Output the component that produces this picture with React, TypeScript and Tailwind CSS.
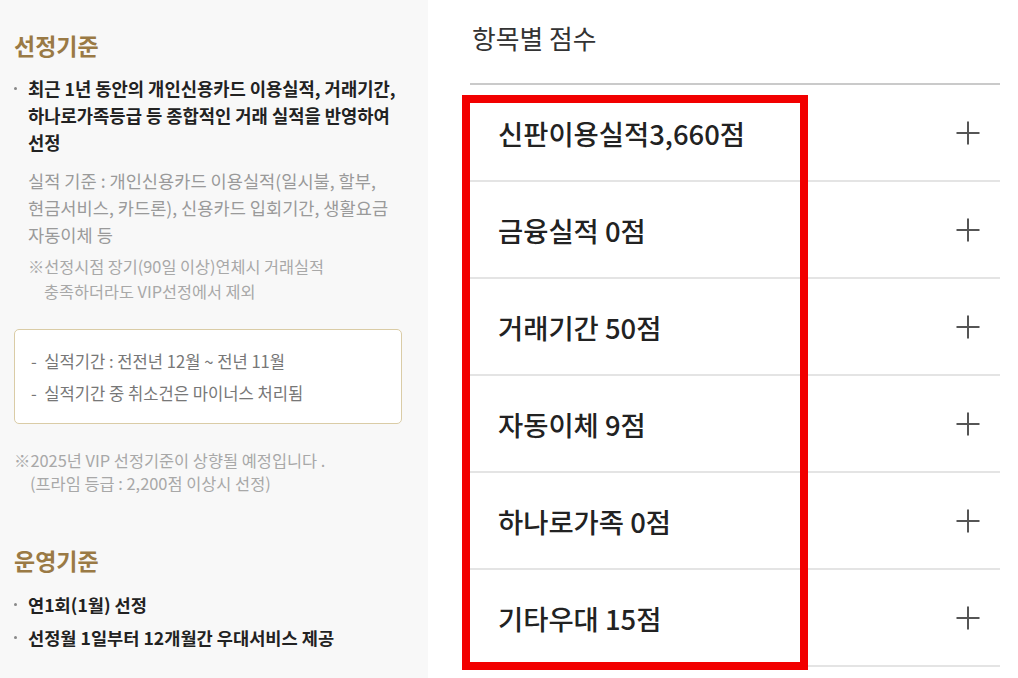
import React from "react";

const FONT = { fontFamily: '"Noto Sans CJK KR", "Noto Sans", "Liberation Sans", sans-serif' };

function Dot() {
  return (
    <span className="flex h-[27px] w-[14px] shrink-0 items-center">
      <span className="block h-[3px] w-[3px] rounded-full bg-[#888]" />
    </span>
  );
}

function Plus() {
  return (
    <svg width="24" height="24" viewBox="0 0 24 24" className="shrink-0">
      <line x1="12" y1="0.5" x2="12" y2="23.5" stroke="#555" strokeWidth="2" />
      <line x1="0.5" y1="12" x2="23.5" y2="12" stroke="#555" strokeWidth="2" />
    </svg>
  );
}

const rows = [
  "신판이용실적3,660점",
  "금융실적 0점",
  "거래기간 50점",
  "자동이체 9점",
  "하나로가족 0점",
  "기타우대 15점",
];

export default function App() {
  return (
    <div className="relative flex h-[678px] w-[1018px] overflow-hidden bg-white" style={FONT}>
      {/* Left panel */}
      <div className="flex h-full w-[428px] shrink-0 flex-col bg-[#f8f8f8] pl-[14px] pr-[16px] pt-[30px]">
        <h2 className="text-[23px] font-bold leading-[30px] text-[#9a7a45]">선정기준</h2>

        <div className="mt-[14.5px] flex">
          <Dot />
          <p className="whitespace-nowrap text-[17.7px] font-bold leading-[27px] text-[#222]">
            최근 1년 동안의 개인신용카드 이용실적, 거래기간,
            <br />
            하나로가족등급 등 종합적인 거래 실적을 반영하여
            <br />
            선정
          </p>
        </div>

        <p className="ml-[14px] mt-[11px] whitespace-nowrap text-[17.6px] leading-[27px] text-[#9a9a9a]">
          실적 기준 : 개인신용카드 이용실적(일시불, 할부,
          <br />
          현금서비스, 카드론), 신용카드 입회기간, 생활요금
          <br />
          자동이체 등
        </p>

        <p className="ml-[14px] mt-[6px] whitespace-nowrap text-[16.3px] leading-[25px] text-[#a8a8a8]">
          ※선정시점 장기(90일 이상)연체시 거래실적
          <br />
          <span className="pl-[16px]">충족하더라도 VIP선정에서 제외</span>
        </p>

        <div className="mt-[25.5px] mr-[10px] flex h-[95px] flex-col gap-[8px] rounded-[5px] border border-[#dacca6] bg-white pl-[16px] pt-[19px]">
          <p className="whitespace-nowrap text-[16.6px] leading-[24px] text-[#777]">-&nbsp;&nbsp;실적기간 : 전전년 12월 ~ 전년 11월</p>
          <p className="whitespace-nowrap text-[16.6px] leading-[24px] text-[#777]">-&nbsp;&nbsp;실적기간 중 취소건은 마이너스 처리됨</p>
        </div>

        <p className="mt-[24.5px] whitespace-nowrap text-[16.4px] leading-[23px] text-[#a8a8a8]">
          ※2025년 VIP 선정기준이 상향될 예정입니다 .
          <br />
          <span className="pl-[16px]">(프라임 등급 : 2,200점 이상시 선정)</span>
        </p>

        <h2 className="mt-[50.5px] text-[23px] font-bold leading-[30px] text-[#9a7a45]">운영기준</h2>

        <div className="mt-[15.5px] flex">
          <Dot />
          <p className="whitespace-nowrap text-[17.6px] font-bold leading-[27px] text-[#222]">연1회(1월) 선정</p>
        </div>
        <div className="mt-[6px] flex">
          <Dot />
          <p className="whitespace-nowrap text-[17.6px] font-bold leading-[27px] text-[#222]">선정월 1일부터 12개월간 우대서비스 제공</p>
        </div>
      </div>

      {/* Right panel */}
      <div className="flex h-full flex-1 flex-col pl-[42px] pr-[18px] pt-[22px]">
        <h3 className="pl-[2px] text-[25.8px] font-normal leading-[32px] text-[#333]">항목별 점수</h3>
        <div className="mt-[29px] border-t-2 border-[#cacaca]">
          {rows.map((r) => (
            <div
              key={r}
              className="flex h-[97px] items-center justify-between border-b-2 border-[#e4e4e4] pl-[28px] pr-[20px]"
            >
              <span className="whitespace-nowrap text-[27.4px] font-medium leading-[36px] text-[#222]">{r}</span>
              <Plus />
            </div>
          ))}
        </div>
      </div>

      {/* Red highlight overlay */}
      <div className="pointer-events-none absolute left-[462px] top-[95px] h-[575px] w-[346px] border-[8px] border-[#f20000]" />
    </div>
  );
}
